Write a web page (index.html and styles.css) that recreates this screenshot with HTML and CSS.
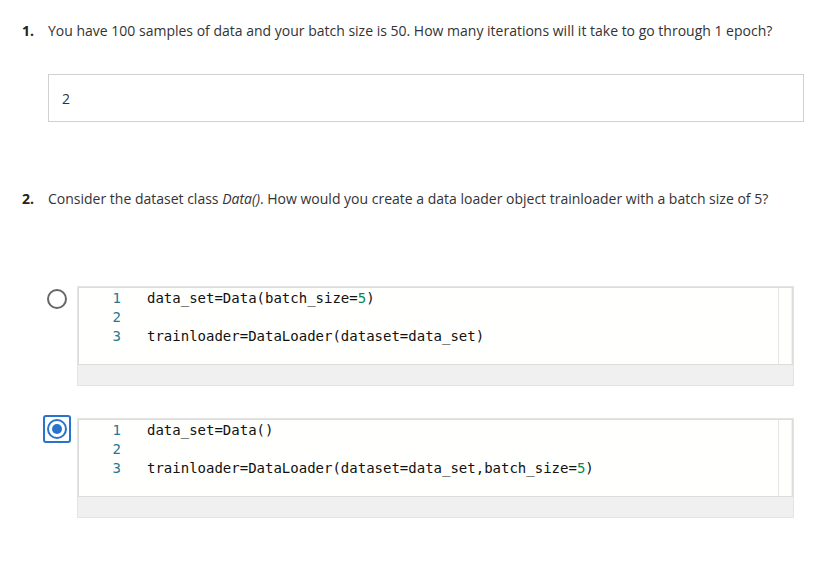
FILE: index.html
```html
<!DOCTYPE html>
<html>
<head>
<meta charset="utf-8">
<link rel="stylesheet" href="styles.css">
</head>
<body>
<div class="quiz">
  <div class="question q1">
    <div class="qhead">
      <span class="num">1.</span>
      <span class="qtext">You have 100 samples of data and your batch size is 50. How many iterations will it take to go through 1 epoch?</span>
    </div>
    <div class="answer-box">2</div>
  </div>

  <div class="question q2">
    <div class="qhead">
      <span class="num">2.</span>
      <span class="qtext">Consider the dataset class <em>Data()</em>. How would you create a data loader object trainloader with a batch size of 5?</span>
    </div>

    <div class="options">
      <div class="option">
        <div class="radio-wrap">
          <span class="radio"></span>
        </div>
        <div class="code-box">
          <div class="editor">
            <div class="lines">
              <div class="line"><span class="ln">1</span><span class="code">data_set=Data(batch_size=<span class="numlit">5</span>)</span></div>
              <div class="line"><span class="ln">2</span><span class="code"></span></div>
              <div class="line"><span class="ln">3</span><span class="code">trainloader=DataLoader(dataset=data_set)</span></div>
            </div>
            <div class="scroll"></div>
          </div>
          <div class="footer"></div>
        </div>
      </div>

      <div class="option">
        <div class="radio-wrap focused">
          <span class="radio checked"></span>
        </div>
        <div class="code-box">
          <div class="editor">
            <div class="lines">
              <div class="line"><span class="ln">1</span><span class="code">data_set=Data()</span></div>
              <div class="line"><span class="ln">2</span><span class="code"></span></div>
              <div class="line"><span class="ln">3</span><span class="code">trainloader=DataLoader(dataset=data_set,batch_size=<span class="numlit">5</span>)</span></div>
            </div>
            <div class="scroll"></div>
          </div>
          <div class="footer"></div>
        </div>
      </div>
    </div>
  </div>
</div>
</body>
</html>
```

FILE: styles.css
```css
* { box-sizing: border-box; }
html, body { margin: 0; padding: 0; background: #fff; }
body {
  font-family: "Open Sans", "Noto Sans", sans-serif;
  font-size: 14px;
  color: #333;
}
.quiz {
  padding: 20px 33px 0 22px;
}
.qhead {
  display: flex;
  align-items: baseline;
  line-height: 21px;
}
.num {
  width: 26px;
  flex: none;
  font-weight: 700;
  color: #222;
}
.qtext { color: #333; }
.qtext em { font-style: italic; }

.answer-box {
  margin: 33px 0 0 26px;
  height: 48px;
  border: 1px solid #d0d0d0;
  padding: 0 13px;
  display: flex;
  align-items: center;
  color: #333;
}

.q2 { margin-top: 66px; }

.options {
  margin-top: 77px;
  display: flex;
  flex-direction: column;
  gap: 32px;
}
.option {
  display: flex;
  align-items: flex-start;
}
.radio-wrap {
  width: 28px;
  height: 28px;
  margin: -3px 6px 0 21px;
  display: flex;
  align-items: center;
  justify-content: center;
  border: 2px solid transparent;
  border-radius: 3px;
  flex: none;
}
.option:first-child .radio-wrap { margin-top: -1px; }
.radio-wrap.focused {
  border-color: #2a73cc;
}
.radio {
  width: 20px;
  height: 20px;
  border-radius: 50%;
  border: 2px solid #666;
  display: flex;
  align-items: center;
  justify-content: center;
}
.radio.checked {
  border-color: #2a73cc;
}
.radio.checked::after {
  content: "";
  width: 10px;
  height: 10px;
  border-radius: 50%;
  background: #2a73cc;
}

.code-box {
  flex: 1;
  margin-right: 10px;
  border: 1px solid #e4e4e4;
  background: #fff;
}
.editor {
  display: flex;
  height: 78px;
  border: 1px solid #dcdcdc;
  background: #fffffd;
}
.lines {
  flex: 1;
  padding-top: 1px;
}
.line {
  display: flex;
  height: 19px;
  line-height: 19px;
  font-family: "DejaVu Sans Mono", "Liberation Mono", monospace;
  font-size: 14px;
}
.ln {
  width: 42px;
  text-align: right;
  color: #237893;
  flex: none;
}
.code {
  margin-left: 26px;
  color: #111;
  white-space: pre;
}
.numlit { color: #098658; }
.scroll {
  width: 14px;
  flex: none;
  border-left: 1px solid #e6e6e6;
  border-right: 1px solid #f2f2f2;
}
.footer {
  height: 20px;
  background: #f0f0f0;
}
```
